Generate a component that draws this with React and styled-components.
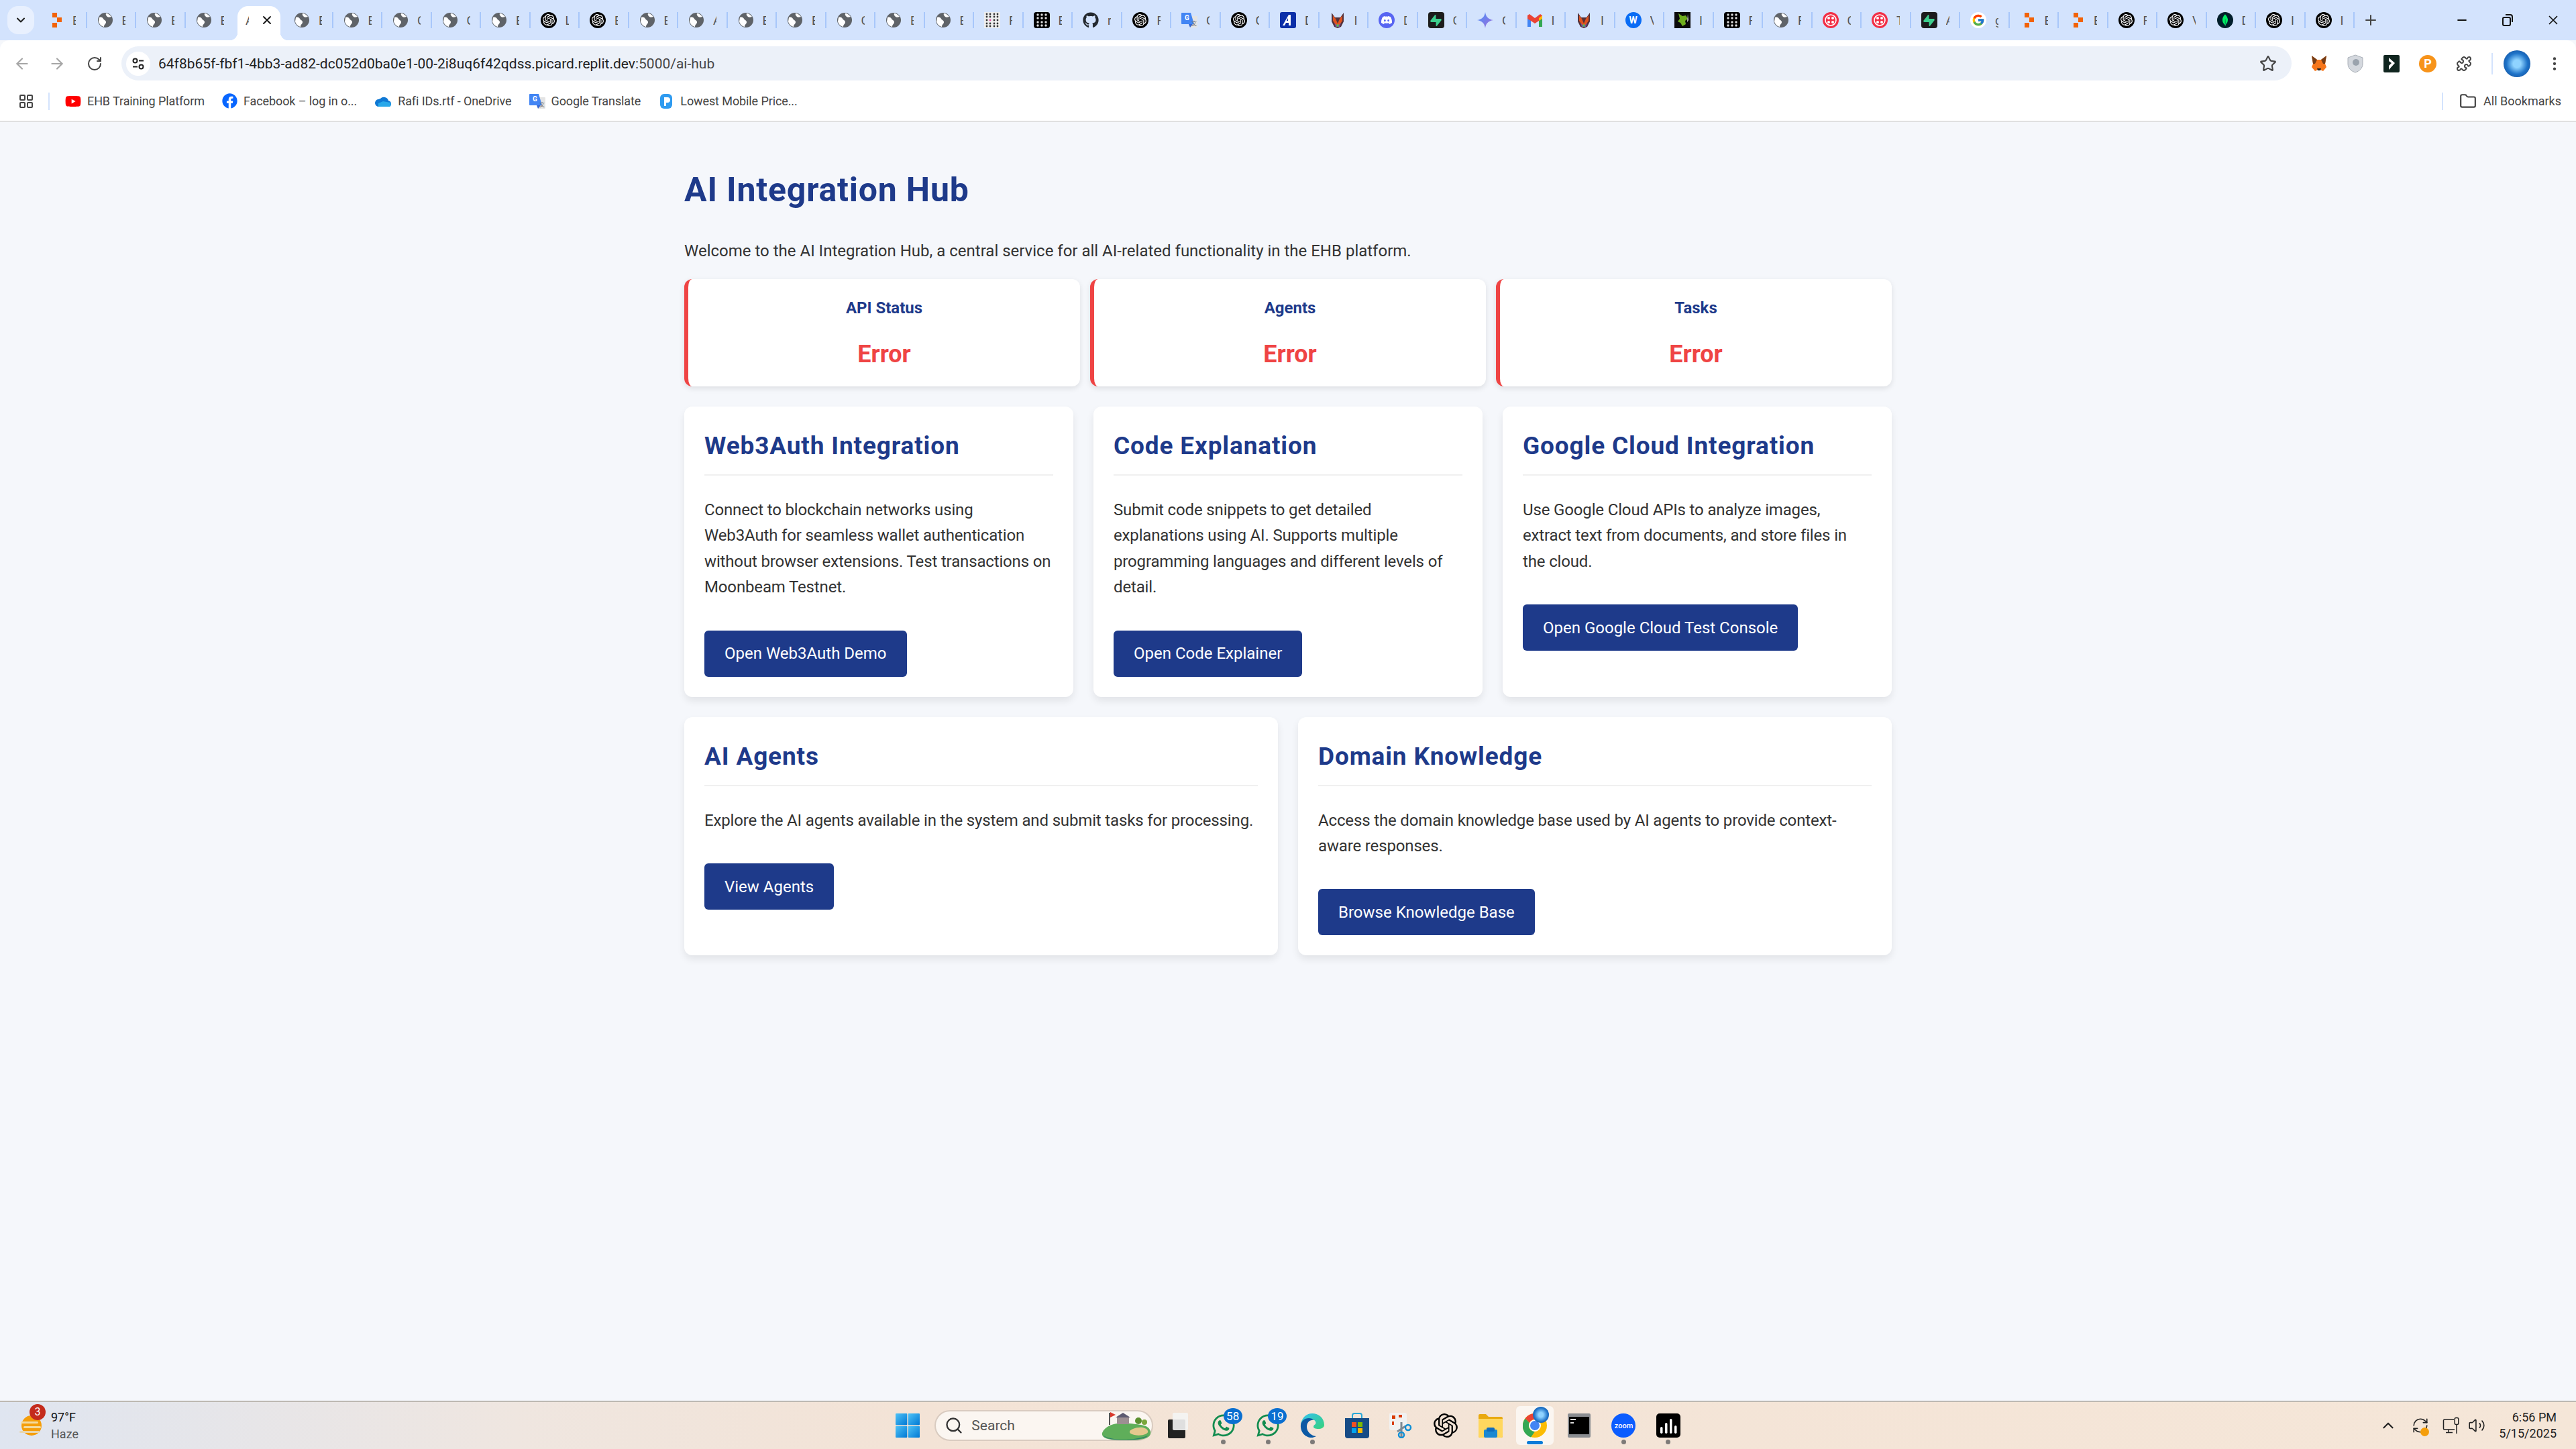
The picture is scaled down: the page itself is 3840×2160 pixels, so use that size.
import React from 'react'
import styled, { createGlobalStyle } from 'styled-components'
import {
  ArrowLeft, ArrowRight, RotateCw, Star, Puzzle, MoreVertical, LayoutGrid, Folder,
  Plus, X, Minus, ChevronDown, ChevronUp, Volume2, RefreshCw, Search,
} from 'lucide-react'
import { FaGithub, FaFacebook, FaWhatsapp, FaYoutube } from 'react-icons/fa'
import { FcGoogle } from 'react-icons/fc'
import { SiOpenai, SiDiscord, SiSupabase, SiMongodb } from 'react-icons/si'

const NAVY = '#1e3a8a'
const RED = '#ef4444'

const GlobalStyle = createGlobalStyle`
  html, body {
    margin: 0;
    padding: 0;
    background: #f5f7fb;
    font-family: Roboto, "Open Sans", sans-serif;
  }
  * { box-sizing: border-box; }
`

const TABS = [
  ['replit', 'E'], ['globe', 'E'], ['globe', 'E'], ['globe', 'E'], ['active', 'A'], ['globe', 'E'], ['globe', 'E'],
  ['globe', 'G'], ['globe', 'G'], ['globe', 'E'], ['gpt', 'L'], ['gpt', 'E'], ['globe', 'E'], ['globe', 'A'],
  ['globe', 'E'], ['globe', 'E'], ['globe', 'G'], ['globe', 'E'], ['globe', 'E'], ['dots', 'F'], ['blackdots', 'E'],
  ['github', 'r'], ['gpt', 'F'], ['translate', 'G'], ['gpt', 'G'], ['aicon', 'D'], ['fox', 'I'], ['discord', 'D'],
  ['supabase', 'G'], ['gemini', 'G'], ['gmail', 'I'], ['fox', 'I'], ['word', 'V'], ['dragon', 'I'], ['blackdots', 'F'],
  ['globe', 'F'], ['twilio', 'C'], ['twilio', 'T'], ['supabase', 'A'], ['google', 'g'], ['replit', 'E'], ['replit', 'E'],
  ['gpt', 'F'], ['gpt', 'V'], ['mongo', 'D'], ['gpt', 'I'], ['gpt', 'I'],
]

const BOOKMARKS = [
  ['youtube', 'EHB Training Platform'],
  ['facebook', 'Facebook – log in o...'],
  ['onedrive', 'Rafi IDs.rtf - OneDrive'],
  ['translate', 'Google Translate'],
  ['price', 'Lowest Mobile Price...'],
]

const STATS = ['API Status', 'Agents', 'Tasks']

const TOP_CARDS = [
  {
    title: 'Web3Auth Integration',
    text: 'Connect to blockchain networks using\nWeb3Auth for seamless wallet authentication\nwithout browser extensions. Test transactions on\nMoonbeam Testnet.',
    action: 'Open Web3Auth Demo',
  },
  {
    title: 'Code Explanation',
    text: 'Submit code snippets to get detailed explanations using AI. Supports multiple programming languages and different levels of detail.',
    action: 'Open Code Explainer',
  },
  {
    title: 'Google Cloud Integration',
    text: 'Use Google Cloud APIs to analyze images, extract text from documents, and store files in the cloud.',
    action: 'Open Google Cloud Test Console',
  },
]

const BOTTOM_CARDS = [
  {
    title: 'AI Agents',
    text: 'Explore the AI agents available in the system and submit tasks for processing.',
    action: 'View Agents',
  },
  {
    title: 'Domain Knowledge',
    text: 'Access the domain knowledge base used by AI agents to provide context-aware responses.',
    action: 'Browse Knowledge Base',
  },
]

function Favicon({ kind }) {
  switch (kind) {
    case 'replit':
      return (
        <svg width="24" height="24" viewBox="0 0 24 24">
          <rect x="7" y="1" width="7" height="7" fill="#f26207" />
          <rect x="14" y="8" width="7" height="7" fill="#f26207" />
          <rect x="7" y="16" width="7" height="7" fill="#f26207" />
        </svg>
      )
    case 'gpt':
      return <Disc $bg="#000"><SiOpenai size={18} color="#fff" /></Disc>
    case 'dots':
      return (
        <svg width="24" height="24" viewBox="0 0 24 24">
          <rect width="24" height="24" fill="#eee" />
          {[4, 9, 15, 20].flatMap(x => [3, 7, 12, 17, 21].map(y => (
            <circle key={`${x}-${y}`} cx={x} cy={y} r="1.4" fill={x === 9 && y === 12 ? '#e64f9c' : '#333'} />
          )))}
        </svg>
      )
    case 'blackdots':
      return (
        <svg width="24" height="24" viewBox="0 0 24 24">
          <rect width="24" height="24" rx="4" fill="#000" />
          {[6, 12, 18].flatMap(x => [4, 9, 15, 20].map(y => (
            <circle key={`${x}-${y}`} cx={x} cy={y} r="1.7" fill="#ddd" />
          )))}
        </svg>
      )
    case 'github':
      return <FaGithub size={24} color="#24292f" />
    case 'translate':
      return (
        <svg width="24" height="24" viewBox="0 0 24 24">
          <path d="M10 6h13a1 1 0 0 1 1 1v15a1 1 0 0 1-1 1H13z" fill="#e4e4e4" />
          <path d="M1 1h13l5 17H1a1 1 0 0 1-1-1V2a1 1 0 0 1 1-1z" fill="#4285f4" />
          <path d="M11 18h6l-4 5z" fill="#3367d6" />
          <text x="5" y="12" fontFamily="Roboto, sans-serif" fontSize="10" fontWeight="700" fill="#fff">G</text>
          <text x="15" y="20" fontFamily="Roboto, 'Noto Sans CJK SC', sans-serif" fontSize="8" fill="#666">文</text>
        </svg>
      )
    case 'aicon':
      return (
        <svg width="24" height="24" viewBox="0 0 24 24">
          <rect width="24" height="24" rx="3" fill="#0b2fa8" />
          <path d="M13 4h3v16h-3v-4H9l-2 4H4z" fill="#fff" />
          <path d="M12 9v4h-2z" fill="#0b2fa8" />
        </svg>
      )
    case 'fox':
      return (
        <svg width="24" height="24" viewBox="0 0 24 24">
          <path d="M3 1l5 7h8l5-7v13l-4 8-5 2-5-2-4-8z" fill="#53313a" />
          <path d="M5 5l4 5 3 7 3-7 4-5v8l-4 6h-6l-4-6z" fill="#e0531f" />
          <path d="M7 16l5 6 5-6-2 6H9z" fill="#6a4fb3" />
          <circle cx="12" cy="20" r="2" fill="#5fae5a" />
        </svg>
      )
    case 'discord':
      return <Disc $bg="#5865f2"><SiDiscord size={16} color="#fff" /></Disc>
    case 'supabase':
      return <Tile $bg="#1c1c1c"><SiSupabase size={17} color="#3ecf8e" /></Tile>
    case 'gemini':
      return (
        <svg width="24" height="24" viewBox="0 0 24 24">
          <defs>
            <linearGradient id="gem" x1="0" y1="0" x2="1" y2="1">
              <stop offset="0" stopColor="#4893fc" />
              <stop offset="1" stopColor="#a06ad8" />
            </linearGradient>
          </defs>
          <path d="M12 0c.8 6.5 4.5 11 12 12-7.5 1-11.200 5.500-12 12-.8-6.500-4.500-11-12-12 7.500-1 11.200-5.500 12-12z" fill="url(#gem)" />
        </svg>
      )
    case 'gmail':
      return (
        <svg width="24" height="24" viewBox="0 0 24 24">
          <path d="M1 22V5l5 4v13z" fill="#4285f4" />
          <path d="M18 22V9l5-4v17z" fill="#34a853" />
          <path d="M1 5l3-2 8 6 8-6 3 2v5l-5 3-6 4-6-4-5-3z" fill="#ea4335" />
          <path d="M18 9l5-4v5l-5 3z" fill="#fbbc04" />
        </svg>
      )
    case 'word':
      return <Disc $bg="#0a6cf5"><WordMark>W</WordMark></Disc>
    case 'dragon':
      return (
        <svg width="24" height="24" viewBox="0 0 24 24">
          <rect width="24" height="24" fill="#0b0b0b" />
          <path d="M6 2l6 4 5-1 3 5-4 3 1 5-5 3-3-5-4-2 3-4z" fill="#6fae1e" />
          <path d="M20 3l1 9-2 3z" fill="#ddd" />
        </svg>
      )
    case 'twilio':
      return (
        <Disc $bg="#f22f46">
          <svg width="18" height="18" viewBox="0 0 18 18">
            <circle cx="9" cy="9" r="8" fill="none" stroke="#fff" strokeWidth="1.600" />
            {[6, 12].flatMap(x => [6, 12].map(y => <circle key={`${x}-${y}`} cx={x} cy={y} r="2" fill="#fff" />))}
          </svg>
        </Disc>
      )
    case 'google':
      return <Disc $bg="#fff"><FcGoogle size={20} /></Disc>
    case 'mongo':
      return <Disc $bg="#001e2b"><SiMongodb size={18} color="#00ed64" /></Disc>
    case 'youtube':
      return <FaYoutube size={24} color="#f00" />
    case 'facebook':
      return <FaFacebook size={23} color="#0866ff" />
    case 'onedrive':
      return (
        <svg width="26" height="24" viewBox="0 0 26 24">
          <path d="M9 8a7 7 0 0 1 12 3 5 5 0 0 1 2 9H7a5.500 5.500 0 0 1-1-11z" fill="#0f78d4" />
          <path d="M6 20h17a5 5 0 0 0 1-6l-11-2-7 3z" fill="#28a8ea" />
        </svg>
      )
    case 'price':
      return (
        <svg width="24" height="24" viewBox="0 0 24 24">
          <rect x="3" y="1" width="18" height="22" rx="6" fill="#2f9bf0" />
          <path d="M9 6h5a3.500 3.500 0 0 1 0 8h-2v5H9z" fill="#fff" />
        </svg>
      )
    default:
      return (
        <svg width="24" height="24" viewBox="0 0 24 24">
          <circle cx="12" cy="12" r="11" fill="#5f6368" />
          <path d="M3 8c3-1 5 0 6 2s4 2 4 5-3 3-3 7c-4-1-7-4-8-8zM13 2c3 0 6 2 8 5-3 1-5 1-6 0s-3-3-2-5z" fill="#fff" />
        </svg>
      )
  }
}

function WeatherIcon() {
  return (
    <svg width="36" height="36" viewBox="0 0 36 36">
      <circle cx="20" cy="18" r="15" fill="#f59e0b" />
      <rect x="4" y="12" width="26" height="3" rx="1.500" fill="#f3dba0" />
      <rect x="8" y="19" width="26" height="3" rx="1.500" fill="#f3dba0" />
      <rect x="2" y="26" width="30" height="3" rx="1.500" fill="#e8d6ae" />
    </svg>
  )
}

function StartIcon() {
  return (
    <svg width="36" height="36" viewBox="0 0 36 36">
      <defs>
        <linearGradient id="win" x1="0" y1="0" x2="1" y2="1">
          <stop offset="0" stopColor="#4fc3f7" />
          <stop offset="1" stopColor="#0078d4" />
        </linearGradient>
      </defs>
      <rect x="0" y="0" width="17.300" height="17.300" rx="1" fill="url(#win)" />
      <rect x="18.700" y="0" width="17.300" height="17.300" rx="1" fill="url(#win)" />
      <rect x="0" y="18.700" width="17.300" height="17.300" rx="1" fill="url(#win)" />
      <rect x="18.700" y="18.700" width="17.300" height="17.300" rx="1" fill="url(#win)" />
    </svg>
  )
}

function Landscape() {
  return (
    <svg width="76" height="46" viewBox="0 0 76 46">
      <path d="M2 34C8 20 28 18 44 20s28 2 30 12-12 13-34 13S0 44 2 34z" fill="#5fae5a" />
      <path d="M48 28c10-4 20-2 22 3s-10 8-20 6-8-7-2-9z" fill="#e5c88e" />
      <path d="M4 38c14 8 44 8 66 0-4 8-60 10-66 0z" fill="#2c7f6b" />
      <rect x="24" y="10" width="18" height="11" fill="#9d8f92" />
      <path d="M22 11l11-7 11 7z" fill="#5c5a70" />
      <rect x="12" y="4" width="2" height="18" fill="#555" />
      <path d="M14 3l8 4-8 4z" fill="#dc3a2c" />
      <circle cx="56" cy="16" r="5" fill="#5b8f2f" />
      <circle cx="65" cy="18" r="4" fill="#7ba63a" />
    </svg>
  )
}

function MediaIcon() {
  return (
    <svg width="36" height="38" viewBox="0 0 36 38">
      <rect x="6" y="10" width="26" height="28" rx="2" fill="#222" />
      <rect x="13" y="0" width="23" height="26" rx="2" fill="#f4f4f4" opacity=".9" />
    </svg>
  )
}

function EdgeIcon() {
  return (
    <svg width="36" height="36" viewBox="0 0 36 36">
      <defs>
        <linearGradient id="edgeA" x1="0" y1="0" x2="1" y2="1">
          <stop offset="0" stopColor="#35c1f1" />
          <stop offset="1" stopColor="#36d27a" />
        </linearGradient>
      </defs>
      <path d="M1 17C2 7 9 0 18 0c10 0 18 7 18 17 0 4-4 6-9 6-4 0-7-1-7-3 0-4 5-3 3-8-2-4-8-5-12-2-5 3-8 7-10 7z" fill="url(#edgeA)" />
      <path d="M1 17c1-6 6-10 12-10 3 0 6 1 8 3-6-1-11 3-11 10 0 7 6 13 14 14-3 1.500-5 2-7 2C8 36 0 28 1 17z" fill="#0c59a4" />
    </svg>
  )
}

function StoreIcon() {
  return (
    <svg width="36" height="38" viewBox="0 0 36 38">
      <path d="M11 8V4a3 3 0 0 1 3-3h8a3 3 0 0 1 3 3v4" fill="none" stroke="#27a7d8" strokeWidth="2" />
      <path d="M0 8h36v26a4 4 0 0 1-4 4H4a4 4 0 0 1-4-4z" fill="#164b86" />
      <rect x="10" y="14" width="7" height="7" fill="#f25022" />
      <rect x="19" y="14" width="7" height="7" fill="#7fba00" />
      <rect x="10" y="23" width="7" height="7" fill="#00a4ef" />
      <rect x="19" y="23" width="7" height="7" fill="#ffb900" />
    </svg>
  )
}

function SnipIcon() {
  return (
    <svg width="36" height="38" viewBox="0 0 36 38">
      <rect x="0" y="0" width="26" height="26" rx="3" fill="#f1f1f1" />
      <path d="M4 4h5v5H4zM4 13h3v5H4z" fill="#d83b01" />
      <path d="M14 3h5v4h-5z" fill="#d83b01" />
      <path d="M18 14v24M24 20l-12 8" stroke="#7f8a93" strokeWidth="3" />
      <circle cx="28" cy="22" r="4" fill="none" stroke="#0f8fd6" strokeWidth="2.500" />
      <circle cx="18" cy="33" r="4" fill="none" stroke="#0f8fd6" strokeWidth="2.500" />
    </svg>
  )
}

function FolderIcon() {
  return (
    <svg width="36" height="36" viewBox="0 0 36 36">
      <path d="M0 3a2 2 0 0 1 2-2h9l4 4h19a2 2 0 0 1 2 2v27a2 2 0 0 1-2 2H2a2 2 0 0 1-2-2z" fill="#e9a90f" />
      <path d="M0 8h36v26a2 2 0 0 1-2 2H2a2 2 0 0 1-2-2z" fill="#ffd75e" />
      <rect x="8" y="24" width="20" height="12" rx="2" fill="#1b88d1" />
      <rect x="12" y="21" width="12" height="6" rx="2" fill="#0f6cbd" />
    </svg>
  )
}

function ChromeIcon() {
  return (
    <svg width="36" height="36" viewBox="0 0 36 36">
      <circle cx="18" cy="18" r="18" fill="#fbbc04" />
      <path d="M18 0a18 18 0 0 1 15.600 9H18a9 9 0 0 0-8 5L3.500 7.500A18 18 0 0 1 18 0z" fill="#ea4335" />
      <path d="M3.500 7.500L10 14a9 9 0 0 0 8 13l-6 8.500A18 18 0 0 1 3.500 7.500z" fill="#34a853" />
      <circle cx="18" cy="18" r="8" fill="#4285f4" stroke="#fff" strokeWidth="2" />
    </svg>
  )
}

function TerminalIcon() {
  return (
    <svg width="36" height="36" viewBox="0 0 36 36">
      <rect x="1" y="0" width="34" height="36" rx="2" fill="#8a8d91" />
      <rect x="3" y="5" width="30" height="26" fill="#000" />
      <rect x="5" y="8" width="8" height="2" fill="#ddd" />
      <rect x="5" y="13" width="5" height="2" fill="#ddd" />
    </svg>
  )
}

function AudioIcon() {
  return (
    <svg width="36" height="36" viewBox="0 0 36 36">
      <rect width="36" height="36" rx="5" fill="#000" />
      {[[6, 20, 10], [13, 14, 16], [20, 8, 22], [27, 18, 12]].map(([x, y, h]) => (
        <rect key={x} x={x} y={y} width="3.500" height={h} rx="1.700" fill="#fff" />
      ))}
    </svg>
  )
}

function NetworkIcon() {
  return (
    <svg width="26" height="26" viewBox="0 0 26 26" fill="none" stroke="#222" strokeWidth="1.500">
      <path d="M17 4H3a1.500 1.500 0 0 0-1.500 1.500v12A1.500 1.500 0 0 0 3 19h15" />
      <path d="M9 19v4M5 23.500h10M21 12v13" />
      <rect x="18.200" y="1.500" width="5.600" height="10" rx="2" />
    </svg>
  )
}

function SiteInfoIcon() {
  return (
    <svg width="20" height="20" viewBox="0 0 20 20" fill="none" stroke="#222" strokeWidth="2">
      <circle cx="5.500" cy="5.500" r="3" />
      <path d="M11 5.500h7M2 14.500h7" />
      <circle cx="14.500" cy="14.500" r="3" />
    </svg>
  )
}

function FoxMini() {
  return (
    <svg width="26" height="26" viewBox="0 0 26 26">
      <path d="M2 1l8 6h6l8-6-2 12 2 5-5 6-4-2h-4l-4 2-5-6 2-5z" fill="#f6761b" />
      <path d="M2 1l8 6-3 6H4zM24 1l-8 6 3 6h3z" fill="#763d16" />
      <path d="M10 20h6l-1 3h-4z" fill="#222" />
    </svg>
  )
}

function ShieldMini() {
  return (
    <svg width="26" height="28" viewBox="0 0 26 28">
      <path d="M13 1l11 4v9c0 7-5 11-11 13C7 25 2 21 2 14V5z" fill="#d4d8de" stroke="#aab0b8" />
      <circle cx="14" cy="12" r="5" fill="#9aa3ad" />
    </svg>
  )
}

function SlashMini() {
  return (
    <svg width="24" height="26" viewBox="0 0 24 26">
      <rect width="24" height="26" rx="2" fill="#10251f" />
      <path d="M8 4l9 8-9 10v-6l4-4-4-3z" fill="#fff" />
    </svg>
  )
}

function RestoreGlyph() {
  return (
    <svg width="20" height="20" viewBox="0 0 20 20" fill="none" stroke="#111" strokeWidth="2">
      <rect x="3" y="6" width="11" height="12" rx="2" />
      <path d="M7 2h7a3 3 0 0 1 3 3v8" />
    </svg>
  )
}

function InfoCard({ card }) {
  return (
    <Card>
      <CardTitle>{card.title}</CardTitle>
      <CardText>{card.text}</CardText>
      <ActionButton>{card.action}</ActionButton>
    </Card>
  )
}

export default function App() {
  return (
    <Screen>
      <GlobalStyle />
      <TabStrip>
        <TabSearch><ChevronDown size={20} strokeWidth={2.500} /></TabSearch>
        <Tabs>
          {TABS.map(([icon, letter], i) => (
            icon === 'active' ? (
              <ActiveTab key={i}>
                <TabLetter>{letter}</TabLetter>
                <X size={20} strokeWidth={2.200} />
              </ActiveTab>
            ) : (
              <Tab key={i} $plain={i === 3}>
                <Favicon kind={icon} />
                <TabLetter>{letter}</TabLetter>
              </Tab>
            )
          ))}
        </Tabs>
        <NewTab><Plus size={24} strokeWidth={2} /></NewTab>
        <WindowControls>
          <WindowButton><Minus size={20} strokeWidth={2.500} /></WindowButton>
          <WindowButton><RestoreGlyph /></WindowButton>
          <WindowButton><X size={22} strokeWidth={1.800} /></WindowButton>
        </WindowControls>
      </TabStrip>

      <Chrome>
        <Toolbar>
          <NavButton $dim><ArrowLeft size={26} /></NavButton>
          <NavButton $dim><ArrowRight size={26} /></NavButton>
          <NavButton $reload><RotateCw size={24} /></NavButton>
          <Omnibox>
            <SiteInfo><SiteInfoIcon /></SiteInfo>
            <Url>64f8b65f-fbf1-4bb3-ad82-dc052d0ba0e1-00-2i8uq6f42qdss.picard.replit.dev<UrlTail>:5000/ai-hub</UrlTail></Url>
            <Star size={26} strokeWidth={2} color="#444" />
          </Omnibox>
          <Extensions>
            <ExtensionSlot><FoxMini /></ExtensionSlot>
            <ExtensionSlot><ShieldMini /></ExtensionSlot>
            <ExtensionSlot><SlashMini /></ExtensionSlot>
            <ExtensionSlot><CoinMini>P</CoinMini></ExtensionSlot>
            <ExtensionSlot><Puzzle size={24} color="#444" /></ExtensionSlot>
            <ToolbarRule />
            <Avatar />
            <NavButton><MoreVertical size={26} color="#444" /></NavButton>
          </Extensions>
        </Toolbar>
        <BookmarksBar>
          <AppsButton><LayoutGrid size={24} color="#444" /></AppsButton>
          <BarRule />
          <BookmarkList>
            {BOOKMARKS.map(([icon, label]) => (
              <Bookmark key={label}>
                <Favicon kind={icon} />
                {label}
              </Bookmark>
            ))}
          </BookmarkList>
          <AllBookmarks>
            <Folder size={26} color="#444" />
            All Bookmarks
          </AllBookmarks>
        </BookmarksBar>
      </Chrome>

      <Page>
        <Container>
          <PageTitle>AI Integration Hub</PageTitle>
          <Intro>Welcome to the AI Integration Hub, a central service for all AI-related functionality in the EHB platform.</Intro>
          <StatGrid>
            {STATS.map(label => (
              <StatCard key={label}>
                <StatLabel>{label}</StatLabel>
                <StatValue>Error</StatValue>
              </StatCard>
            ))}
          </StatGrid>
          <CardGrid $columns={3}>
            {TOP_CARDS.map(card => <InfoCard key={card.title} card={card} />)}
          </CardGrid>
          <CardGrid $columns={2}>
            {BOTTOM_CARDS.map(card => <InfoCard key={card.title} card={card} />)}
          </CardGrid>
        </Container>
      </Page>

      <Taskbar>
        <Weather>
          <WeatherGlyph>
            <WeatherIcon />
            <WeatherBadge>3</WeatherBadge>
          </WeatherGlyph>
          <WeatherText>
            <Temperature>97°F</Temperature>
            <Condition>Haze</Condition>
          </WeatherText>
        </Weather>

        <TaskCenter>
          <TaskItem><StartIcon /></TaskItem>
          <SearchBox>
            <Search size={28} color="#333" />
            <SearchLabel>Search</SearchLabel>
            <Landscape />
          </SearchBox>
          <TaskItem $gap><MediaIcon /></TaskItem>
          <TaskItem $running>
            <FaWhatsapp size={38} color="#128c4f" />
            <CountBadge>58</CountBadge>
          </TaskItem>
          <TaskItem $running>
            <FaWhatsapp size={38} color="#128c4f" />
            <CountBadge>19</CountBadge>
          </TaskItem>
          <TaskItem $running><EdgeIcon /></TaskItem>
          <TaskItem><StoreIcon /></TaskItem>
          <TaskItem><SnipIcon /></TaskItem>
          <TaskItem><SiOpenai size={36} color="#000" /></TaskItem>
          <TaskItem><FolderIcon /></TaskItem>
          <TaskItem $active>
            <ChromeIcon />
            <ProfileBadge />
          </TaskItem>
          <TaskItem><TerminalIcon /></TaskItem>
          <TaskItem $running><ZoomMark>zoom</ZoomMark></TaskItem>
          <TaskItem $running><AudioIcon /></TaskItem>
        </TaskCenter>

        <Tray>
          <TrayIcon $width={48}><ChevronUp size={26} color="#222" /></TrayIcon>
          <TrayIcon $width={48}>
            <RefreshCw size={26} color="#222" strokeWidth={1.500} />
            <SyncDot />
          </TrayIcon>
          <TrayIcon $width={44}><NetworkIcon /></TrayIcon>
          <TrayIcon $width={32}><Volume2 size={26} color="#222" strokeWidth={1.500} /></TrayIcon>
          <Clock>
            <span>6:56 PM</span>
            <span>5/15/2025</span>
          </Clock>
        </Tray>
      </Taskbar>
    </Screen>
  )
}

const Screen = styled.div`
  display: flex;
  flex-direction: column;
  min-height: 100vh;
  background: #f5f7fb;
`

const TabStrip = styled.div`
  display: flex;
  align-items: center;
  height: 60px;
  padding-left: 11px;
  background: #d3e3fd;
`

const TabSearch = styled.div`
  display: flex;
  align-items: center;
  justify-content: center;
  flex: none;
  width: 40px;
  height: 42px;
  margin-right: 5px;
  border-radius: 16px;
  background: #e8f0fe;
  color: #1f1f1f;
`

const Tabs = styled.div`
  display: flex;
  align-items: center;
  height: 100%;
`

const Tab = styled.div`
  position: relative;
  display: flex;
  align-items: center;
  gap: 13px;
  flex: none;
  width: 73.5px;
  height: 100%;
  padding-left: 15px;
  overflow: hidden;

  &::after {
    content: '';
    display: ${p => (p.$plain ? 'none' : 'block')};
    position: absolute;
    right: 0;
    top: 18px;
    width: 2px;
    height: 24px;
    background: #a8c7fa;
  }
`

const ActiveTab = styled.div`
  position: relative;
  display: flex;
  align-items: center;
  gap: 17px;
  flex: none;
  width: 64px;
  height: 51px;
  margin: 9px 5px 0 4px;
  padding: 0 0 9px 12px;
  border-radius: 16px 16px 0 0;
  background: #fff;
  color: #111;

  &::before, &::after {
    content: '';
    position: absolute;
    bottom: 0;
    width: 12px;
    height: 12px;
  }

  &::before {
    left: -12px;
    background: radial-gradient(circle at 0 0, transparent 12px, #fff 12.5px);
  }

  &::after {
    right: -12px;
    background: radial-gradient(circle at 100% 0, transparent 12px, #fff 12.5px);
  }
`

const TabLetter = styled.span`
  flex: none;
  width: 5px;
  overflow: hidden;
  font-size: 18px;
  color: #555;
`

const NewTab = styled.div`
  display: flex;
  align-items: center;
  justify-content: center;
  width: 48px;
  color: #444;
`

const WindowControls = styled.div`
  display: flex;
  margin-left: auto;
`

const WindowButton = styled.div`
  display: flex;
  align-items: center;
  justify-content: center;
  width: 68px;
  color: #111;
`

const Chrome = styled.div`
  border-radius: 14px 14px 0 0;
  background: #fff;
  border-bottom: 2px solid #e0e0e0;
`

const Toolbar = styled.div`
  display: flex;
  align-items: center;
  height: 69px;
  padding: 0 6px 0 7px;
`

const NavButton = styled.div`
  display: flex;
  align-items: center;
  justify-content: center;
  flex: none;
  width: 52px;
  height: 48px;
  margin-left: ${p => (p.$reload ? '4px' : '0')};
  color: ${p => (p.$dim ? '#a6a6a6' : '#444')};
`

const Omnibox = styled.div`
  display: flex;
  align-items: center;
  flex: none;
  width: 3235px;
  height: 51px;
  margin-left: 14px;
  padding: 0 22px 0 7px;
  border-radius: 26px;
  background: #ecf1f9;
`

const SiteInfo = styled.div`
  display: flex;
  align-items: center;
  justify-content: center;
  flex: none;
  width: 36px;
  height: 36px;
  border-radius: 50%;
  background: #fff;
`

const Url = styled.div`
  flex: 1;
  margin-left: 12px;
  font-size: 21px;
  color: #1f1f1f;
`

const UrlTail = styled.span`
  color: #474747;
`

const Extensions = styled.div`
  display: flex;
  align-items: center;
  flex: 1;
  justify-content: flex-end;
`

const ExtensionSlot = styled.div`
  display: flex;
  align-items: center;
  justify-content: center;
  flex: none;
  width: 54px;
`

const CoinMini = styled.div`
  display: flex;
  align-items: center;
  justify-content: center;
  width: 26px;
  height: 26px;
  border-radius: 50%;
  background: #f7931a;
  color: #fff;
  font-size: 18px;
  font-weight: 700;
`

const ToolbarRule = styled.div`
  flex: none;
  width: 2px;
  height: 32px;
  margin: 0 16px 0 14px;
  background: #d3e3fd;
`

const Avatar = styled.div`
  flex: none;
  width: 40px;
  height: 40px;
  margin-right: 10px;
  border-radius: 50%;
  background: radial-gradient(circle, #8fd3ff 0 20%, #1f74c9 55%, #0c3f88 100%);
`

const BookmarksBar = styled.div`
  display: flex;
  align-items: center;
  height: 51px;
  padding: 0 22px 8px 0;
`

const AppsButton = styled.div`
  display: flex;
  justify-content: center;
  flex: none;
  width: 78px;
  margin-right: -6px;
`

const BarRule = styled.div`
  flex: none;
  width: 2px;
  height: 26px;
  background: #d3e3fd;
`

const BookmarkList = styled.div`
  display: flex;
  align-items: center;
  gap: 26px;
  flex: 1;
  margin-left: 23px;
`

const Bookmark = styled.div`
  display: flex;
  align-items: center;
  gap: 9px;
  font-size: 18px;
  letter-spacing: -0.1px;
  color: #444;
  white-space: nowrap;
`

const AllBookmarks = styled.div`
  display: flex;
  align-items: center;
  gap: 10px;
  padding-left: 24px;
  border-left: 2px solid #d3e3fd;
  font-size: 18px;
  color: #444;
`

const Page = styled.main`
  flex: 1;
  padding-top: 69px;
`

const Container = styled.div`
  width: 1800px;
  margin: 0 auto;
`

const PageTitle = styled.h1`
  margin: 0 0 41px;
  font-size: 50px;
  line-height: 64px;
  letter-spacing: 0.8px;
  font-weight: 700;
  color: ${NAVY};
`

const Intro = styled.p`
  margin: 0 0 24px;
  font-size: 24px;
  line-height: 36px;
  color: #333;
`

const StatGrid = styled.div`
  display: grid;
  grid-template-columns: repeat(3, 1fr);
  gap: 15px;
  margin-bottom: 30px;
`

const StatCard = styled.div`
  padding: 24px;
  border-left: 6px solid ${RED};
  border-radius: 12px;
  background: #fff;
  text-align: center;
  box-shadow: 0 3px 9px rgba(0, 0, 0, 0.1);
`

const StatLabel = styled.div`
  margin-bottom: 26px;
  font-size: 24px;
  line-height: 38px;
  font-weight: 700;
  color: ${NAVY};
`

const StatValue = styled.div`
  font-size: 36px;
  line-height: 48px;
  font-weight: 700;
  color: ${RED};
`

const CardGrid = styled.div`
  display: grid;
  grid-template-columns: repeat(${p => p.$columns}, 1fr);
  gap: 30px;
  margin-bottom: 30px;
`

const Card = styled.section`
  padding: 30px;
  border-radius: 12px;
  background: #fff;
  box-shadow: 0 6px 12px rgba(0, 0, 0, 0.08);
`

const CardTitle = styled.h2`
  margin: 0 0 32px;
  padding-bottom: 13px;
  border-bottom: 2px solid #f0f0f0;
  font-size: 37px;
  line-height: 58px;
  letter-spacing: 0.85px;
  font-weight: 700;
  color: ${NAVY};
`

const CardText = styled.p`
  margin: 0 0 45px;
  font-size: 24px;
  line-height: 38.4px;
  letter-spacing: -0.15px;
  white-space: pre-line;
  color: #333;
`

const ActionButton = styled.button`
  display: inline-block;
  height: 69px;
  padding: 0 30px;
  border: 0;
  border-radius: 6px;
  background: ${NAVY};
  color: #fff;
  font-family: inherit;
  font-size: 24px;
`

const Taskbar = styled.footer`
  display: grid;
  grid-template-columns: 1fr auto 1fr;
  align-items: center;
  height: 72px;
  border-top: 2px solid #bdb8b2;
  background: linear-gradient(90deg, #dfe5f0 0%, #efe6e0 20%, #f3e3d6 35%, #f5e6d8 100%);
`

const Weather = styled.div`
  display: flex;
  align-items: center;
  gap: 13px;
  padding-left: 27px;
`

const WeatherGlyph = styled.div`
  position: relative;
  display: flex;
  width: 36px;
`

const WeatherBadge = styled.span`
  position: absolute;
  top: -14px;
  left: 17px;
  width: 24px;
  height: 24px;
  border-radius: 50%;
  background: #c42b1c;
  color: #fff;
  font-size: 16px;
  line-height: 24px;
  text-align: center;
`

const WeatherText = styled.div`
  display: flex;
  flex-direction: column;
  font-size: 18px;
  line-height: 25px;
`

const Temperature = styled.span`
  color: #111;
`

const Condition = styled.span`
  color: #555;
`

const TaskCenter = styled.div`
  display: flex;
  align-items: center;
  height: 100%;
`

const TaskItem = styled.div`
  position: relative;
  display: flex;
  align-items: center;
  justify-content: center;
  flex: none;
  width: 66.3px;
  height: 100%;
  margin-right: ${p => (p.$gap ? '5px' : '0')};

  &::before {
    content: '';
    display: ${p => (p.$active ? 'block' : 'none')};
    position: absolute;
    left: 5px;
    right: 5px;
    top: 6px;
    bottom: 6px;
    border-radius: 6px;
    background: rgba(255, 255, 255, 0.65);
  }

  & > * {
    position: relative;
  }

  &::after {
    content: '';
    display: ${p => (p.$running || p.$active ? 'block' : 'none')};
    position: absolute;
    left: 50%;
    bottom: 7px;
    width: ${p => (p.$active ? '24px' : '7px')};
    height: ${p => (p.$active ? '5px' : '7px')};
    margin-left: ${p => (p.$active ? '-12px' : '-3.5px')};
    border-radius: 4px;
    background: ${p => (p.$active ? '#0a7cd8' : '#7d7a78')};
  }
`

const SearchBox = styled.div`
  display: flex;
  align-items: center;
  flex: none;
  width: 326px;
  height: 46px;
  margin-left: 7px;
  padding-left: 13px;
  border: 2px solid #d9cbc0;
  border-radius: 24px;
  background: #fbf6f1;
`

const SearchLabel = styled.span`
  flex: 1;
  margin-left: 12px;
  font-size: 21px;
  color: #555;
`

const CountBadge = styled.span`
  position: absolute !important;
  top: 9px;
  left: 33px;
  width: 28px;
  height: 24px;
  border-radius: 50%;
  background: #0a6fd0;
  color: #fff;
  font-size: 17px;
  line-height: 24px;
  text-align: center;
`

const ProfileBadge = styled.span`
  position: absolute !important;
  top: 7px;
  left: 30px;
  width: 24px;
  height: 24px;
  border-radius: 50%;
  background: radial-gradient(circle, #8fd3ff 0 20%, #1f74c9 60%, #0c3f88 100%);
`

const ZoomMark = styled.span`
  display: flex;
  align-items: center;
  justify-content: center;
  width: 36px;
  height: 36px;
  border-radius: 50%;
  background: #0b5cff;
  color: #fff;
  font-size: 11px;
  font-weight: 500;
`

const Tray = styled.div`
  display: flex;
  align-items: center;
  justify-content: flex-end;
  padding-right: 29px;
`

const TrayIcon = styled.div`
  position: relative;
  display: flex;
  justify-content: center;
  width: ${p => p.$width}px;
`

const SyncDot = styled.span`
  position: absolute;
  left: 24px;
  bottom: -3px;
  width: 13px;
  height: 13px;
  border-radius: 50%;
  background: #f59e0b;
`

const Clock = styled.div`
  display: flex;
  flex-direction: column;
  align-items: flex-end;
  margin-left: 17px;
  font-size: 18px;
  line-height: 24px;
  color: #222;
`

const Disc = styled.span`
  display: flex;
  align-items: center;
  justify-content: center;
  flex: none;
  width: 24px;
  height: 24px;
  border-radius: 50%;
  background: ${p => p.$bg};
`

const Tile = styled(Disc)`
  border-radius: 4px;
`

const WordMark = styled.span`
  color: #fff;
  font-size: 14px;
  font-weight: 700;
`
